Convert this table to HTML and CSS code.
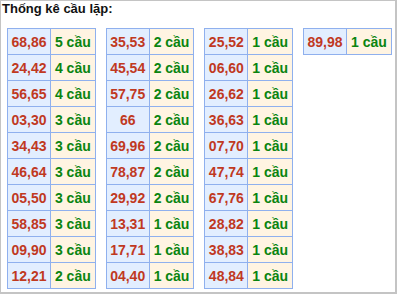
FILE: index.html
```html
<!DOCTYPE html>
<html>
<head>
<meta charset="utf-8">
<link rel="stylesheet" href="styles.css">
</head>
<body>
<div class="box">
  <div class="title">Thống kê cầu lặp:</div>
  <div class="tables">
    <table class="stat">
      <tr><td class="num">68,86</td><td class="cnt">5 cầu</td></tr>
      <tr><td class="num">24,42</td><td class="cnt">4 cầu</td></tr>
      <tr><td class="num">56,65</td><td class="cnt">4 cầu</td></tr>
      <tr><td class="num">03,30</td><td class="cnt">3 cầu</td></tr>
      <tr><td class="num">34,43</td><td class="cnt">3 cầu</td></tr>
      <tr><td class="num">46,64</td><td class="cnt">3 cầu</td></tr>
      <tr><td class="num">05,50</td><td class="cnt">3 cầu</td></tr>
      <tr><td class="num">58,85</td><td class="cnt">3 cầu</td></tr>
      <tr><td class="num">09,90</td><td class="cnt">3 cầu</td></tr>
      <tr><td class="num">12,21</td><td class="cnt">2 cầu</td></tr>
    </table>
    <table class="stat">
      <tr><td class="num">35,53</td><td class="cnt">2 cầu</td></tr>
      <tr><td class="num">45,54</td><td class="cnt">2 cầu</td></tr>
      <tr><td class="num">57,75</td><td class="cnt">2 cầu</td></tr>
      <tr><td class="num">66</td><td class="cnt">2 cầu</td></tr>
      <tr><td class="num">69,96</td><td class="cnt">2 cầu</td></tr>
      <tr><td class="num">78,87</td><td class="cnt">2 cầu</td></tr>
      <tr><td class="num">29,92</td><td class="cnt">2 cầu</td></tr>
      <tr><td class="num">13,31</td><td class="cnt">1 cầu</td></tr>
      <tr><td class="num">17,71</td><td class="cnt">1 cầu</td></tr>
      <tr><td class="num">04,40</td><td class="cnt">1 cầu</td></tr>
    </table>
    <table class="stat">
      <tr><td class="num">25,52</td><td class="cnt">1 cầu</td></tr>
      <tr><td class="num">06,60</td><td class="cnt">1 cầu</td></tr>
      <tr><td class="num">26,62</td><td class="cnt">1 cầu</td></tr>
      <tr><td class="num">36,63</td><td class="cnt">1 cầu</td></tr>
      <tr><td class="num">07,70</td><td class="cnt">1 cầu</td></tr>
      <tr><td class="num">47,74</td><td class="cnt">1 cầu</td></tr>
      <tr><td class="num">67,76</td><td class="cnt">1 cầu</td></tr>
      <tr><td class="num">28,82</td><td class="cnt">1 cầu</td></tr>
      <tr><td class="num">38,83</td><td class="cnt">1 cầu</td></tr>
      <tr><td class="num">48,84</td><td class="cnt">1 cầu</td></tr>
    </table>
    <table class="stat">
      <tr><td class="num">89,98</td><td class="cnt">1 cầu</td></tr>
    </table>
  </div>
</div>
</body>
</html>
```
FILE: styles.css
```css
html, body {
  margin: 0;
  padding: 0;
  background: #fff;
}
.box {
  box-sizing: border-box;
  width: 397px;
  height: 294px;
  border: 1px solid #c4c4c4;
  border-right-width: 2px;
  border-bottom-width: 2px;
  font-family: "Liberation Sans", Arial, sans-serif;
}
.title {
  font-size: 13px;
  font-weight: bold;
  color: #111;
  padding-left: 1px;
  line-height: 15px;
  height: 15px;
}
.tables {
  display: flex;
  align-items: flex-start;
  gap: 10px;
  padding-left: 6px;
  margin-top: 12px;
}
.stat {
  border-collapse: collapse;
  width: 88.7px;
  table-layout: fixed;
  font-size: 14px;
}
.stat td {
  border: 1px solid #8fb0ee;
  height: 25px;
  padding: 0;
  text-align: center;
  font-weight: bold;
  line-height: 16px;
}
.stat td.num {
  width: 42px;
  background: #e2eeff;
  color: #c0391f;
}
.stat td.cnt {
  background: #fff4e2;
  color: #0a8410;
}
```
